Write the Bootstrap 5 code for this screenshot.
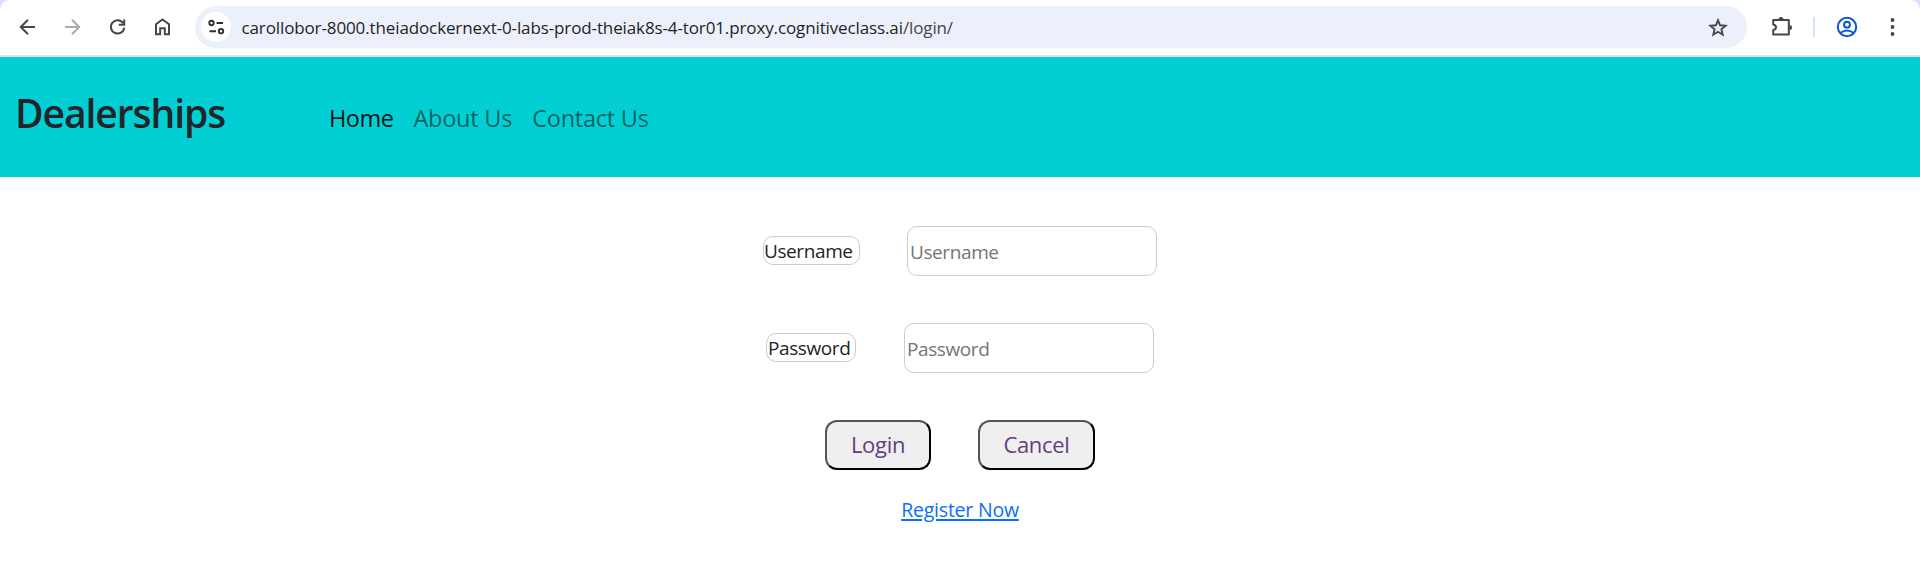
<!DOCTYPE html>
<html lang="en">
<head>
<meta charset="utf-8">
<meta name="viewport" content="width=device-width, initial-scale=1">
<title>Dealerships</title>
<link href="https://cdn.jsdelivr.net/npm/bootstrap@5.3.0/dist/css/bootstrap.min.css" rel="stylesheet">
<style>
body{font-family:"Open Sans","Noto Sans",sans-serif;font-size:19px;overflow:hidden}
.chrome-frame{background:#d3e3fd;height:57px}
.chrome-bar{height:57px;background:#fff;border-bottom:2px solid #e0e2e1;border-radius:10px 10px 0 0;padding:0 16px 1px 16px}
.tool-icon{width:24px;height:24px;flex:none;display:block}
.nav-tools{gap:21px;width:179px}
.omnibox{width:1552px;height:42px;border-radius:21px;background:#ecf0fa;padding:0 17px 0 6px}
.site-info{width:30px;height:30px;background:#fff}
.url-text{font-size:17px;letter-spacing:-.12px;margin-left:10.5px;padding-top:1px;color:#1f1f1f;line-height:24px;white-space:nowrap}
.url-path{color:#474747}
.right-tools{padding-left:23px}
.tool-divider{width:2px;height:20px;background:#d3e3fd;margin-left:19px}
.profile-icon{margin-left:20px}
.menu-icon{margin-left:21px}
.dealer-nav{height:120px;background:#02cfd3;padding:0 15px;align-items:flex-start}
.dealer-title{font-size:39px;font-weight:600;letter-spacing:-1.05px;line-height:48px;margin:32px 0 0;width:314px}
.dealer-links{gap:20px;margin-top:43px;font-size:23.5px;line-height:36px;white-space:nowrap}
.dealer-links .nav-link{padding:0;color:rgba(0,0,0,.55);letter-spacing:-.23px}
.dealer-links .nav-link.active{color:rgba(0,0,0,.92);letter-spacing:-.5px}
.login-panel{padding-top:49px}
.field-row{height:50px;margin-bottom:47px}
.field-label{height:29px;border:1px solid #ccc;border-radius:10px;padding-left:0;line-height:29px;letter-spacing:-.4px;white-space:nowrap;margin-bottom:2px}
.label-user{width:97px}
.label-pass{width:90px;padding-left:1px}
.field-input{width:250px;height:50px;border:1px solid #ccc;border-radius:10px;padding:1px 2px 0 2px;letter-spacing:-.4px;outline:0}
.field-input::placeholder{color:#757575;opacity:1}
.gap-field{gap:47px}
.gap-pass{gap:48px}
.action-btn{height:50px;border:2px solid;border-color:#555 #000 #000 #555;border-radius:12px;background:#efefef;color:#663d80;font-size:22px;letter-spacing:-.3px;padding:0 0 2px;line-height:44px}
.register-link{margin-top:25px;line-height:30px;color:#0d6efd;font-size:19.5px;letter-spacing:-.22px;text-decoration-thickness:2px;text-underline-offset:2px}
</style>
</head>
<body>
<div class="chrome-frame">
  <div class="chrome-bar d-flex align-items-center">
    <div class="nav-tools d-flex align-items-center flex-shrink-0">
      <svg class="tool-icon" viewBox="0 0 24 24" fill="none" stroke="#474747" stroke-width="2"><path d="M19 12H5.2M12 4.8L4.8 12l7.2 7.2"/></svg>
      <svg class="tool-icon" viewBox="0 0 24 24" fill="none" stroke="#ababab" stroke-width="2"><path d="M4 12h13.8M11 4.8l7.2 7.2-7.2 7.2"/></svg>
      <svg class="tool-icon" viewBox="0 0 24 24" fill="none" stroke="#474747" stroke-width="2"><path d="M17.2 8.1A6.7 6.7 0 1 0 18.3 12.6M18.2 4.5v5.2h-5.5"/></svg>
      <svg class="tool-icon" viewBox="0 0 24 24" fill="none" stroke="#474747" stroke-width="2"><path d="M5 9.2l6.5-4.8L18 9.2v10h-4.2v-6H9.200v6H5z"/></svg>
    </div>
    <div class="omnibox d-flex align-items-center flex-shrink-0">
      <div class="site-info rounded-circle d-flex align-items-center justify-content-center flex-shrink-0">
        <svg width="20" height="20" viewBox="0 0 20 20" fill="none" stroke="#303030" stroke-width="1.9"><circle cx="5.500" cy="6" r="2.200"/><path d="M10.500 6H17M3.500 14.200H10"/><circle cx="15" cy="14.200" r="2.200"/></svg>
      </div>
      <div class="url-text">carollobor-8000.theiadockernext-0-labs-prod-theiak8s-4-tor01.proxy.cognitiveclass.ai<span class="url-path">/login/</span></div>
      <svg class="tool-icon ms-auto" viewBox="0 0 24 24" fill="none" stroke="#474747" stroke-width="1.9"><path d="M12 5.300l2.100 5 5.500.5-4.200 3.500 1.300 5.400-4.700-2.900-4.700 2.900 1.300-5.400-4.200-3.500 5.500-.5z"/></svg>
    </div>
    <div class="right-tools d-flex align-items-center flex-grow-1">
      <svg class="tool-icon" viewBox="0 0 24 24"><path d="M3.200 5h15.600v14.600H3.200v-4.500q2.800-.6 2.800-2.800T3.200 9.500z" fill="none" stroke="#474747" stroke-width="2" stroke-linejoin="round"/><path d="M8.500 4.500a2.500 2.500 0 0 1 5 0zM19.500 10v5a2.500 2.500 0 0 0 0-5z" fill="#474747"/></svg>
      <div class="tool-divider"></div>
      <svg class="tool-icon profile-icon" viewBox="0 0 24 24" fill="none" stroke="#0b57d0" stroke-width="2"><circle cx="12" cy="12" r="9.200"/><circle cx="12" cy="9.700" r="2.900"/><path d="M5.300 18q6.700-4.800 13.400 0"/></svg>
      <svg class="tool-icon menu-icon" viewBox="0 0 24 24" fill="#474747"><circle cx="12.500" cy="5" r="1.900"/><circle cx="12.500" cy="12" r="1.900"/><circle cx="12.500" cy="19" r="1.900"/></svg>
    </div>
  </div>
</div>
<nav class="dealer-nav d-flex">
  <h2 class="dealer-title">Dealerships</h2>
  <div class="dealer-links d-flex">
    <a class="nav-link active" href="#">Home</a>
    <a class="nav-link" href="#">About Us</a>
    <a class="nav-link" href="#">Contact Us</a>
  </div>
</nav>
<form class="login-panel d-flex flex-column align-items-center">
  <div class="field-row gap-field d-flex align-items-center">
    <span class="field-label label-user">Username</span>
    <input class="field-input" type="text" placeholder="Username" aria-label="Username">
  </div>
  <div class="field-row gap-pass d-flex align-items-center">
    <span class="field-label label-pass">Password</span>
    <input class="field-input" type="password" placeholder="Password" aria-label="Password">
  </div>
  <div class="gap-field d-flex">
    <button class="action-btn" style="width:106px" type="button">Login</button>
    <button class="action-btn" style="width:117px" type="button">Cancel</button>
  </div>
  <a class="register-link" href="#">Register Now</a>
</form>
<script src="https://cdn.jsdelivr.net/npm/bootstrap@5.3.0/dist/js/bootstrap.bundle.min.js"></script>
</body>
</html>
